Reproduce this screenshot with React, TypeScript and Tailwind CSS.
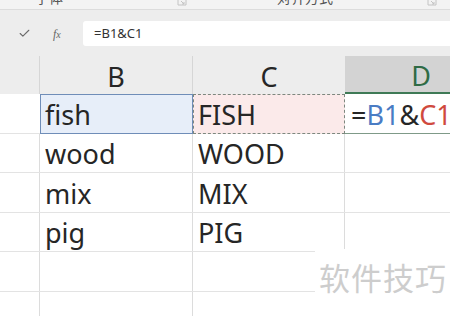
import { Check } from 'lucide-react';

const FONT = { fontFamily: '"Noto Sans", "Noto Sans CJK SC", sans-serif' };

const ROWS: { b: string; c: string; h: string }[] = [
  { b: 'wood', c: 'WOOD', h: 'h-[39px]' },
  { b: 'mix', c: 'MIX', h: 'h-[40px]' },
  { b: 'pig', c: 'PIG', h: 'h-[39px]' },
  { b: '', c: '', h: 'h-[40px]' },
  { b: '', c: '', h: 'h-[40px]' },
];

function Launcher() {
  return (
    <svg width="10" height="8" viewBox="0 0 10 8" className="text-[#c4c4c4]">
      <path d="M1 1h8v6H1z" fill="none" stroke="currentColor" strokeWidth="1" />
      <path d="M4 3l3 3M7 4v2H5" fill="none" stroke="currentColor" strokeWidth="1" />
    </svg>
  );
}

export default function App() {
  return (
    <div className="relative w-[450px] h-[316px] overflow-hidden bg-white text-[#262626]" style={FONT}>
      {/* ribbon group labels (cut off) */}
      <div className="h-[10px] overflow-hidden bg-[#f3f3f3] border-b border-[#dcdcdc] flex items-start text-[14px] text-[#555]">
        <span className="shrink-0 ml-[35px] -mt-[9px] leading-none">字体</span>
        <span className="shrink-0 ml-[114px] -mt-[2px]"><Launcher /></span>
        <span className="shrink-0 ml-[90px] -mt-[9px] leading-none">对齐方式</span>
        <span className="shrink-0 ml-[94px] -mt-[2px]"><Launcher /></span>
      </div>
      <div className="h-[11px] bg-[#ededed]" />

      {/* formula bar */}
      <div className="h-[25px] flex bg-[#ededed]">
        <div className="w-[83px] shrink-0 flex items-center">
          <Check size={13} strokeWidth={2} className="ml-[18px] text-[#6a6a6a]" />
          <span className="ml-[22px] text-[12px] italic text-[#666]" style={{ fontFamily: '"Liberation Serif", serif' }}>
            f<span className="text-[10px]">x</span>
          </span>
        </div>
        <div className="flex-1 bg-white rounded-l-[3px] flex items-center pl-[11px] text-[13px] text-[#333]">=B1&amp;C1</div>
      </div>
      <div className="h-[10px] bg-[#ededed]" />

      {/* column header */}
      <div className="h-[38px] flex bg-[#ededed] text-[27px] leading-none">
        <div className="w-[40px] shrink-0 border-r border-[#d6d6d6]" />
        <div className="w-[153px] shrink-0 border-r border-[#d6d6d6] flex items-center justify-center pt-[2px]">B</div>
        <div className="w-[152px] shrink-0 flex items-center justify-center pt-[2px]">C</div>
        <div className="w-[152px] shrink-0 bg-[#d3d3d3] border-b-2 border-[#3f7a56] flex items-center justify-center pt-[2px] text-[#2f6b45]">D</div>
      </div>

      {/* row 1 */}
      <div className="h-[40px] flex text-[27px]">
        <div className="w-[40px] shrink-0 border-b border-[#e3e3e3]" />
        <div className="w-[153px] shrink-0 bg-[#e7eef9] border border-[#6f8db8] flex items-center pl-[4px] pt-[3px]">fish</div>
        <div className="w-[152px] shrink-0 bg-[#fbeaea] border border-dashed border-[#7d887f] flex items-center pl-[4px] pt-[3px]">FISH</div>
        <div className="w-[152px] shrink-0 border-b border-[#7f9a88] flex items-center pl-[6px] pt-[3px] whitespace-nowrap">
          <span>=</span>
          <span className="text-[#4a7cc4]">B1</span>
          <span>&amp;</span>
          <span className="text-[#d04a3e]">C1</span>
        </div>
      </div>

      {ROWS.map((r, i) => (
        <div key={i} className={`${r.h} flex text-[27px] border-b border-[#e3e3e3]`}>
          <div className="w-[40px] shrink-0 border-r border-[#dcdcdc]" />
          <div className="w-[153px] shrink-0 border-r border-[#dcdcdc] flex items-center pl-[5px] pt-[3px]">{r.b}</div>
          <div className="w-[152px] shrink-0 border-r border-[#dcdcdc] flex items-center pl-[5px] pt-[3px]">{r.c}</div>
          <div className="w-[152px] shrink-0" />
        </div>
      ))}

      {/* watermark */}
      <div className="absolute left-[315px] top-[249px] w-[135px] h-[67px] bg-white flex items-start pt-[14px] pl-[4px]">
        <span className="text-[31px] leading-none tracking-[1px] text-[#cdcdcd]">软件技巧</span>
      </div>
    </div>
  );
}
